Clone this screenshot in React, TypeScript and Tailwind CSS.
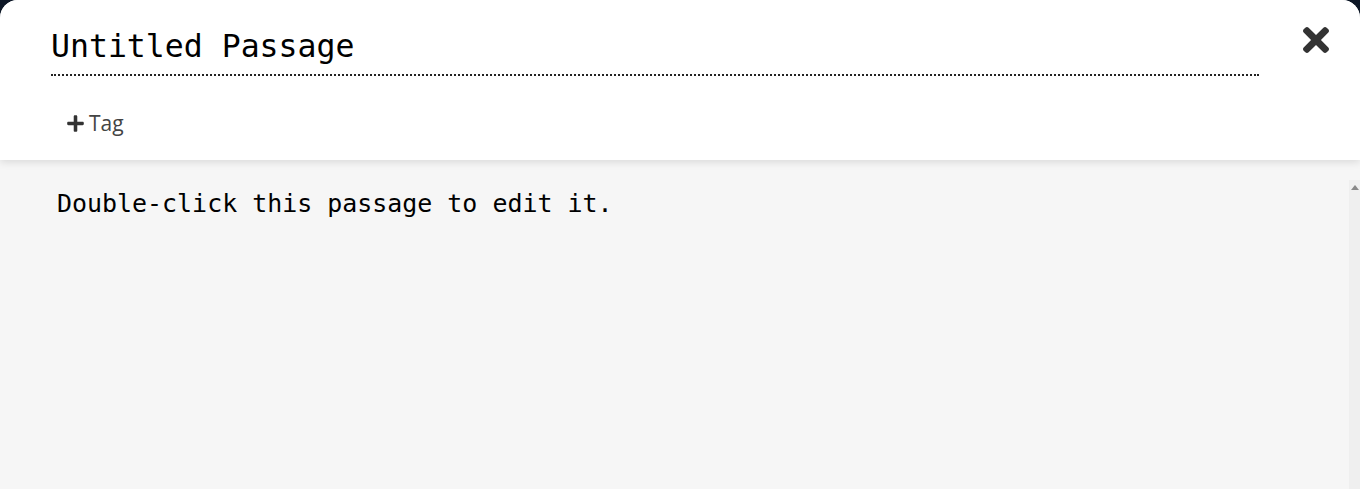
import { FaTimes, FaPlus } from "react-icons/fa";

export default function App() {
  return (
    <div className="h-[489px] w-full overflow-hidden bg-[#0d1726]">
      <div className="flex h-full flex-col overflow-hidden rounded-t-[18px] bg-[#f5f5f5]">
        <header className="relative z-10 h-[160px] shrink-0 bg-white shadow-[0_2px_8px_rgba(0,0,0,0.12)]">
          <div className="flex items-start pl-[51px] pr-[31px] pt-[26px]">
            <div className="flex-1 pr-[44px]">
              <h1 className="border-b-2 border-dotted border-[#222] pb-[8px] font-['DejaVu_Sans_Mono',monospace] text-[31.5px] leading-[40px] text-black">
                Untitled Passage
              </h1>
            </div>
            <button
              type="button"
              className="-mt-[5px] flex w-[26px] items-center justify-center text-[#333]"
            >
              <FaTimes className="h-[38px] w-[26px]" />
            </button>
          </div>
          <div className="mt-[32px] pl-[67px]">
            <button
              type="button"
              className="flex items-center gap-[5px] font-['Open_Sans',sans-serif] text-[21px] text-[#444]"
            >
              <FaPlus className="h-[19px] w-[17px] text-[#333]" />
              <span>Tag</span>
            </button>
          </div>
        </header>
        <main className="relative flex-1 bg-[#f6f6f6]">
          <p className="pl-[57px] pt-[28px] font-['DejaVu_Sans_Mono',monospace] text-[24.95px] leading-[32px] text-black">
            Double-click this passage to edit it.
          </p>
          <div className="absolute bottom-0 right-0 top-[20px] w-[11px] bg-[#efefef]">
            <div className="mx-auto mt-[5px] h-0 w-0 border-x-[4px] border-b-[5px] border-x-transparent border-b-[#888]" />
          </div>
        </main>
      </div>
    </div>
  );
}
